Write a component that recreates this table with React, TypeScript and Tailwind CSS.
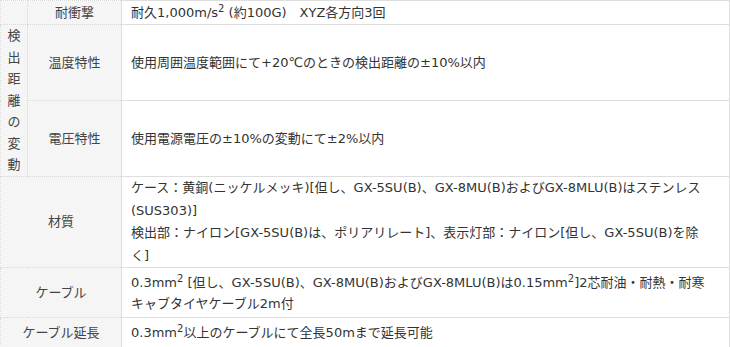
const font = { fontFamily: '"DejaVu Sans", "Noto Sans CJK JP", sans-serif' };

function Sup({ children }: { children: React.ReactNode }) {
  return <sup className="text-[10px]">{children}</sup>;
}

const th = 'bg-[#f5f5f5] border border-dotted border-[#d8d8d8] text-center font-normal text-[#444] align-middle';
const td = 'bg-white border border-solid border-[#dedede] px-[9px] text-left align-middle text-[#333]';

export default function App() {
  const vertical = ['検', '出', '距', '離', 'の', '変', '動'];
  return (
    <div className="w-[730px] h-[347px] bg-white overflow-hidden text-[13px] leading-[22px]" style={font}>
      <table className="w-full border-collapse table-fixed">
        <colgroup>
          <col className="w-[27px]" />
          <col className="w-[94px]" />
          <col />
        </colgroup>
        <tbody>
          <tr className="h-[24px]">
            <th className={th}></th>
            <th className={th}>耐衝撃</th>
            <td className={td}>
              耐久1,000m/s<Sup>2</Sup> (約100G)　XYZ各方向3回
            </td>
          </tr>
          <tr className="h-[76px]">
            <th rowSpan={2} className={th + ' px-0 leading-[21.5px]'}>
              <div className="flex flex-col items-center">
                {vertical.map((c) => (
                  <span key={c}>{c}</span>
                ))}
              </div>
            </th>
            <th className={th}>温度特性</th>
            <td className={td}>使用周囲温度範囲にて+20℃のときの検出距離の±10%以内</td>
          </tr>
          <tr className="h-[76px]">
            <th className={th}>電圧特性</th>
            <td className={td}>使用電源電圧の±10%の変動にて±2%以内</td>
          </tr>
          <tr className="h-[89px]">
            <th colSpan={2} className={th}>材質</th>
            <td className={td + ' leading-[22.5px]'}>
              ケース：黄銅(ニッケルメッキ)[但し、GX-5SU(B)、GX-8MU(B)およびGX-8MLU(B)はステンレス
              <br />
              (SUS303)]
              <br />
              検出部：ナイロン[GX-5SU(B)は、ポリアリレート]、表示灯部：ナイロン[但し、GX-5SU(B)を除
              <br />
              く]
            </td>
          </tr>
          <tr className="h-[50px]">
            <th colSpan={2} className={th}>ケーブル</th>
            <td className={td + ' leading-[21px]'}>
              0.3mm<Sup>2</Sup> [但し、GX-5SU(B)、GX-8MU(B)およびGX-8MLU(B)は0.15mm<Sup>2</Sup>]2芯耐油・耐熱・耐寒
              <br />
              キャブタイヤケーブル2m付
            </td>
          </tr>
          <tr className="h-[30px]">
            <th colSpan={2} className={th}>ケーブル延長</th>
            <td className={td}>
              0.3mm<Sup>2</Sup>以上のケーブルにて全長50mまで延長可能
            </td>
          </tr>
        </tbody>
      </table>
    </div>
  );
}
